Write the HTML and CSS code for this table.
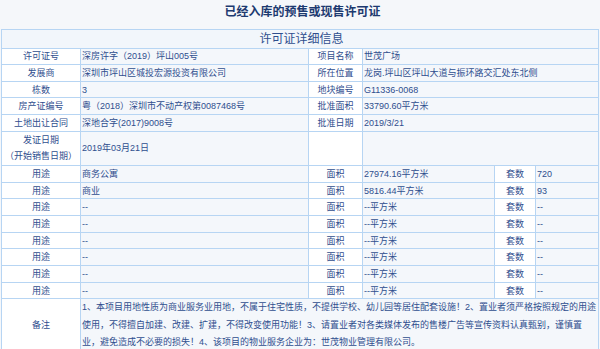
FILE: index.html
```html
<!DOCTYPE html>
<html lang="zh-CN">
<head>
<meta charset="utf-8">
<title>已经入库的预售或现售许可证</title>
<link rel="stylesheet" href="styles.css">
</head>
<body>
<h1 class="title">已经入库的预售或现售许可证</h1>
<table class="permit">
  <colgroup>
    <col class="c1"><col class="c2"><col class="c3"><col class="c4"><col class="c5"><col class="c6">
  </colgroup>
  <tr class="head"><th colspan="6">许可证详细信息</th></tr>
  <tr><td class="lbl">许可证号</td><td class="val">深房许字（2019）坪山005号</td><td class="lbl">项目名称</td><td class="val" colspan="3">世茂广场</td></tr>
  <tr><td class="lbl">发展商</td><td class="val">深圳市坪山区城投宏源投资有限公司</td><td class="lbl">所在位置</td><td class="val" colspan="3">龙岗.坪山区坪山大道与振环路交汇处东北侧</td></tr>
  <tr><td class="lbl">栋数</td><td class="val">3</td><td class="lbl">地块编号</td><td class="val" colspan="3">G11336-0068</td></tr>
  <tr><td class="lbl">房产证编号</td><td class="val">粤（2018）深圳市不动产权第0087468号</td><td class="lbl">批准面积</td><td class="val" colspan="3">33790.60平方米</td></tr>
  <tr><td class="lbl">土地出让合同</td><td class="val">深地合字(2017)9008号</td><td class="lbl">批准日期</td><td class="val" colspan="3">2019/3/21</td></tr>
  <tr class="tall"><td class="lbl">发证日期<br>（开始销售日期）</td><td class="val">2019年03月21日</td><td class="lbl"></td><td class="val" colspan="3"></td></tr>
  <tr><td class="lbl">用途</td><td class="val">商务公寓</td><td class="lbl">面积</td><td class="val">27974.16平方米</td><td class="lbl">套数</td><td class="val">720</td></tr>
  <tr><td class="lbl">用途</td><td class="val">商业</td><td class="lbl">面积</td><td class="val">5816.44平方米</td><td class="lbl">套数</td><td class="val">93</td></tr>
  <tr><td class="lbl">用途</td><td class="val">--</td><td class="lbl">面积</td><td class="val">--平方米</td><td class="lbl">套数</td><td class="val">--</td></tr>
  <tr><td class="lbl">用途</td><td class="val">--</td><td class="lbl">面积</td><td class="val">--平方米</td><td class="lbl">套数</td><td class="val">--</td></tr>
  <tr><td class="lbl">用途</td><td class="val">--</td><td class="lbl">面积</td><td class="val">--平方米</td><td class="lbl">套数</td><td class="val">--</td></tr>
  <tr><td class="lbl">用途</td><td class="val">--</td><td class="lbl">面积</td><td class="val">--平方米</td><td class="lbl">套数</td><td class="val">--</td></tr>
  <tr><td class="lbl">用途</td><td class="val">--</td><td class="lbl">面积</td><td class="val">--平方米</td><td class="lbl">套数</td><td class="val">--</td></tr>
  <tr><td class="lbl">用途</td><td class="val">--</td><td class="lbl">面积</td><td class="val">--平方米</td><td class="lbl">套数</td><td class="val">--</td></tr>
  <tr class="note"><td class="lbl">备注</td><td class="val" colspan="5">1、本项目用地性质为商业服务业用地，不属于住宅性质，不提供学校、幼儿园等居住配套设施！2、置业者须严格按照规定的用途<br>使用，不得擅自加建、改建、扩建，不得改变使用功能！3、请置业者对各类媒体发布的售楼广告等宣传资料认真甄别，谨慎置<br>业，避免造成不必要的损失！4、该项目的物业服务企业为：世茂物业管理有限公司。</td></tr>
</table>
</body>
</html>
```

FILE: styles.css
```css
html, body {
  margin: 0;
  padding: 0;
}
body {
  background: #f5f7fa;
  font-family: "Liberation Sans", "Noto Sans CJK SC", sans-serif;
  color: #2f4e8e;
  text-spacing-trim: space-all;
}
.title {
  margin: 0;
  height: 29px;
  line-height: 25px;
  padding-left: 5px;
  font-size: 12px;
  font-weight: bold;
  text-align: center;
  color: #1d3a70;
}
.permit {
  margin-left: 1px;
  width: 597px;
  table-layout: fixed;
  border-collapse: collapse;
  border: 1px solid #b7d5f3;
  font-size: 9px;
}
.c1 { width: 79px; }
.c2 { width: 228px; }
.c3 { width: 54px; }
.c4 { width: 132px; }
.c5 { width: 41px; }
.c6 { width: 63px; }
.permit th,
.permit td {
  border: 1px solid #b7d5f3;
  padding: 0 1px;
  height: 15.67px;
  line-height: 14px;
  white-space: nowrap;
  overflow: hidden;
}
.permit .head th {
  height: 17.5px;
  background: #f2f6fb;
  font-size: 12px;
  font-weight: normal;
  line-height: 16px;
  padding-left: 4px;
  color: #2f4e8e;
}
.permit .lbl {
  background: #ffffff;
  text-align: center;
}
.permit .val {
  background: #f4f7fb;
  text-align: left;
}
.permit .tall td {
  height: 32.33px;
  line-height: 16.67px;
}
.permit .note td {
  height: 47px;
  line-height: 17.5px;
}
```
